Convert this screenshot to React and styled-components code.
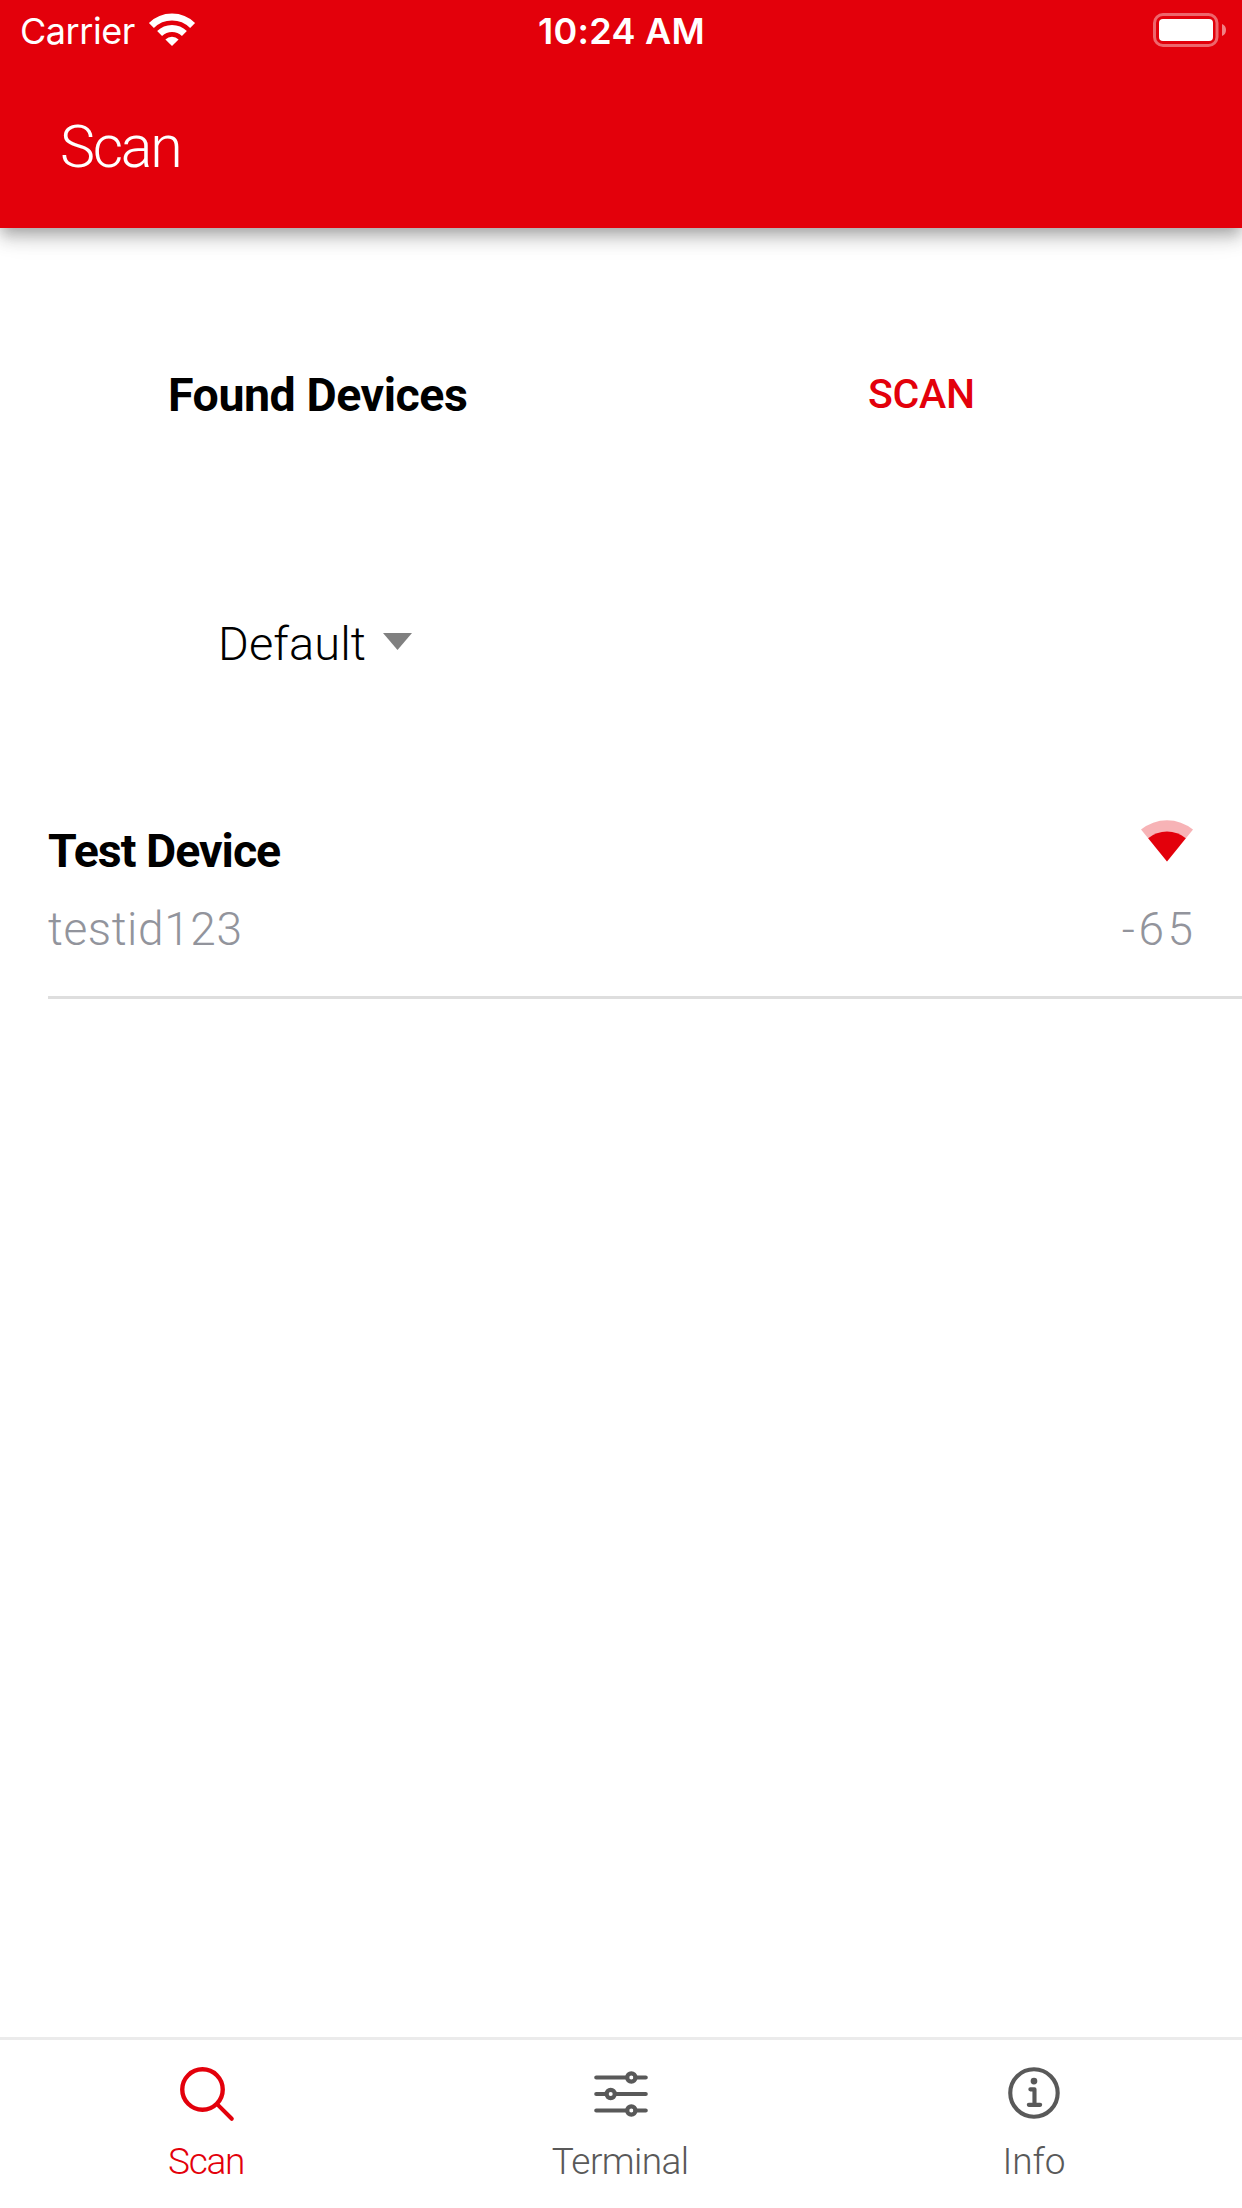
import React from "react";
import styled, { createGlobalStyle } from "styled-components";

const GlobalStyle = createGlobalStyle`
  * { box-sizing: border-box; }
  html, body { margin: 0; padding: 0; background: #fff; }
  body { font-family: Roboto, "Open Sans", sans-serif; -webkit-font-smoothing: antialiased; }
  svg { display: block; flex: none; }
`;

const Screen = styled.div`
  width: 1242px;
  height: 2208px;
  display: flex;
  flex-direction: column;
  background: #fff;
  overflow: hidden;
`;

const Header = styled.header`
  height: 228px;
  flex: none;
  background: #e3000b;
  color: #fff;
  box-shadow: 0 6px 12px -3px rgba(0, 0, 0, 0.2), 0 12px 15px 0 rgba(0, 0, 0, 0.14),
    0 3px 30px 0 rgba(0, 0, 0, 0.12);
`;

const StatusBar = styled.div`
  height: 62px;
  display: grid;
  grid-template-columns: 1fr auto 1fr;
  padding: 0 16px 0 20px;
  font-family: Inter, "Liberation Sans", sans-serif;
  font-size: 36px;
  line-height: 62px;
`;

const Carrier = styled.div`
  display: flex;
  align-items: flex-start;
  gap: 13px;
  letter-spacing: -0.45px;

  svg { margin-top: 12px; }
`;

const Clock = styled.time`
  margin-right: 3px;
  font-weight: 600;
  letter-spacing: 0.3px;
`;

const Battery = styled.div`
  display: flex;
  justify-content: flex-end;
  padding-top: 13px;
`;

const Title = styled.h1`
  margin: 0;
  padding: 3px 0 0 60px;
  font-size: 59px;
  font-weight: 300;
  line-height: 164px;
  letter-spacing: ${(p) => p.$spacing}px;
`;

const Content = styled.main`
  flex: 1;
  display: flex;
  flex-direction: column;
`;

const Heading = styled.h2`
  margin: 0;
  font-size: 46.5px;
  font-weight: 700;
  line-height: 60px;
  color: #000;
  letter-spacing: ${(p) => p.$spacing}px;
`;

const FoundRow = styled.section`
  display: flex;
  align-items: flex-start;
  justify-content: space-between;
  padding: 137px 267px 0 168px;
`;

const ScanButton = styled.button`
  border: 0;
  padding: 0;
  background: none;
  color: #e3000b;
  font-family: inherit;
  font-size: 41px;
  font-weight: 500;
  line-height: 58px;
  letter-spacing: -0.2px;
`;

const Picker = styled.div`
  display: flex;
  align-items: center;
  gap: 17px;
  margin-top: 189px;
  padding-left: 218px;
  color: #000;
  font-size: 47px;
  font-weight: 300;
  line-height: 60px;
  letter-spacing: 0.1px;

  svg { margin-top: -5px; }
`;

const Device = styled.article`
  margin: 142px 0 0 48px;
  padding-right: 49px;
  height: 183px;
  display: flex;
  justify-content: space-between;
  border-bottom: 3px solid #dedede;
`;

const DeviceColumn = styled.div`
  display: flex;
  flex-direction: column;
  justify-content: space-between;
  align-items: ${(p) => (p.$end ? "flex-end" : "flex-start")};
  padding-bottom: 32px;
  padding-top: ${(p) => (p.$end ? 4 : 5)}px;
`;

const Meta = styled.span`
  margin-right: ${(p) => -p.$spacing}px;
  color: #92949c;
  font-size: 46px;
  font-weight: 300;
  line-height: 70px;
  letter-spacing: ${(p) => p.$spacing}px;
`;

const Tabs = styled.nav`
  height: 171px;
  flex: none;
  display: grid;
  grid-template-columns: repeat(3, 1fr);
  border-top: 3px solid #ebebeb;
`;

const Tab = styled.a`
  display: flex;
  flex-direction: column;
  align-items: center;
  padding-top: 21px;
  color: ${(p) => (p.$active ? "#e3000b" : "#595959")};
`;

const TabLabel = styled.span`
  margin-top: 13px;
  padding-right: 2px;
  font-size: 37px;
  font-weight: 300;
  line-height: 44px;
  letter-spacing: ${(p) => p.$spacing}px;
`;

const TabIcon = ({ children }) => (
  <svg width="66" height="66" viewBox="0 0 512 512" fill="none" stroke="currentColor" strokeWidth="32" strokeLinecap="round" strokeLinejoin="round">
    {children}
  </svg>
);

const SearchIcon = () => (
  <TabIcon>
    <circle cx="221.09" cy="221.09" r="157.09" strokeWidth="34" />
    <path d="M338.29 338.29 448 448" />
  </TabIcon>
);

const OptionsIcon = () => (
  <TabIcon>
    <path d="M368 128h80M64 128h240M368 384h80M64 384h240M208 256h240M64 256h80" />
    <circle cx="336" cy="128" r="32" />
    <circle cx="176" cy="256" r="32" />
    <circle cx="336" cy="384" r="32" />
  </TabIcon>
);

const InfoIcon = () => (
  <TabIcon>
    <circle cx="248" cy="248" r="184" />
    <path d="M220 220h32v116M208 340h88" />
    <circle cx="248" cy="156" r="26" fill="currentColor" stroke="none" />
  </TabIcon>
);

const WifiIcon = () => (
  <svg width="48" height="36" viewBox="0 0 48 36" fill="none" stroke="#fff" strokeWidth="7">
    <path d="M3.4 13.4a29.2 29.2 0 0 1 41.2 0" />
    <path d="M11.6 21.6a17.6 17.6 0 0 1 24.8 0" />
    <path d="M24 34 17.4 27.4a9.6 9.6 0 0 1 13.2 0Z" fill="#fff" stroke="none" />
  </svg>
);

const BatteryIcon = () => (
  <svg width="73" height="34" viewBox="0 0 73 34">
    <rect x="1.5" y="1.5" width="62.5" height="31" rx="8.5" fill="none" stroke="#fff" strokeOpacity=".4" strokeWidth="3" />
    <rect x="6" y="6" width="54" height="22" rx="4" fill="#fff" />
    <path d="M69 11a6.5 6.5 0 0 1 0 12Z" fill="#fff" fillOpacity=".5" />
  </svg>
);

const SignalIcon = () => (
  <svg width="52" height="42" viewBox="0 0 52 42">
    <path d="M26 41.5 0 9.5a41.3 41.3 0 0 1 52 0Z" fill="#f7b3b6" />
    <path d="M26 41.5 7.2 18.2a30 30 0 0 1 37.6 0Z" fill="#e3000b" />
  </svg>
);

const Caret = () => (
  <svg width="29" height="17" viewBox="0 0 29 17">
    <path d="M0 0h29L14.5 17Z" fill="#808080" />
  </svg>
);

const tabs = [
  { label: "Scan", Icon: SearchIcon, active: true, spacing: -1.3 },
  { label: "Terminal", Icon: OptionsIcon, spacing: -0.6 },
  { label: "Info", Icon: InfoIcon, spacing: 0 },
];

export default function App() {
  return (
    <Screen>
      <GlobalStyle />
      <Header>
        <StatusBar>
          <Carrier>
            Carrier
            <WifiIcon />
          </Carrier>
          <Clock>10:24 AM</Clock>
          <Battery>
            <BatteryIcon />
          </Battery>
        </StatusBar>
        <Title $spacing={-2.3}>Scan</Title>
      </Header>
      <Content>
        <FoundRow>
          <Heading $spacing={-0.45}>Found Devices</Heading>
          <ScanButton>SCAN</ScanButton>
        </FoundRow>
        <Picker>
          Default
          <Caret />
        </Picker>
        <Device>
          <DeviceColumn>
            <Heading $spacing={-1}>Test Device</Heading>
            <Meta $spacing={0.6}>testid123</Meta>
          </DeviceColumn>
          <DeviceColumn $end>
            <SignalIcon />
            <Meta $spacing={3.5}>-65</Meta>
          </DeviceColumn>
        </Device>
      </Content>
      <Tabs>
        {tabs.map(({ label, Icon, active, spacing }) => (
          <Tab key={label} $active={active}>
            <Icon />
            <TabLabel $spacing={spacing}>{label}</TabLabel>
          </Tab>
        ))}
      </Tabs>
    </Screen>
  );
}
